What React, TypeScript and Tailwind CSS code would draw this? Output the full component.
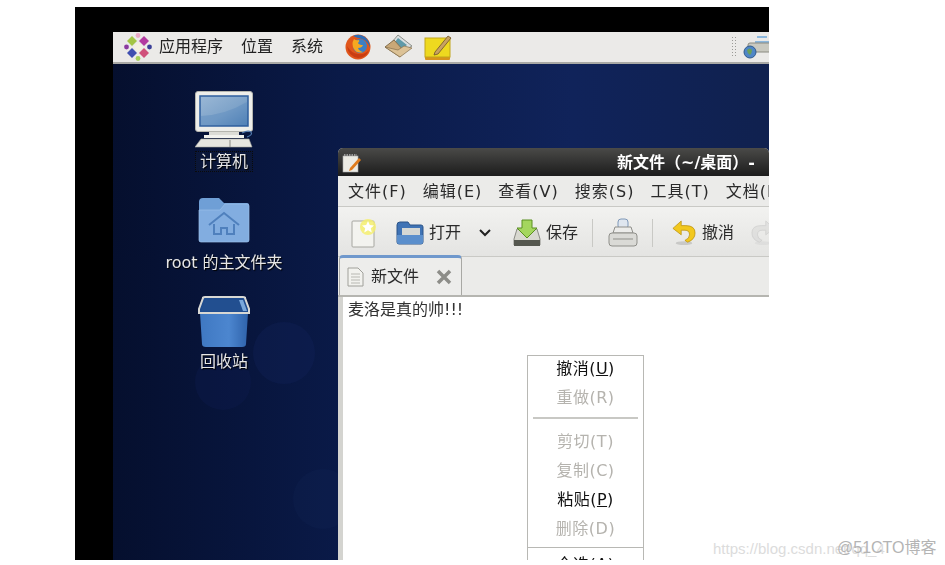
const ui = { fontFamily: '"DejaVu Sans", "Noto Sans CJK SC", sans-serif' };

const Flower = () => (
  <svg width="28" height="28" viewBox="0 0 28 28">
    <g transform="translate(14 14)">
      <path d="M-6 -11 L-1 -6 L-6 -1 L-11 -6Z" fill="#a3c545" />
      <path d="M6 -11 L11 -6 L6 -1 L1 -6Z" fill="#b23aa0" />
      <path d="M6 1 L11 6 L6 11 L1 6Z" fill="#d0507a" />
      <path d="M-6 1 L-1 6 L-6 11 L-11 6Z" fill="#3f4fb0" />
      <circle cx="0" cy="-11.500" r="2.400" fill="#e8a8c4" />
      <circle cx="11.500" cy="0" r="2.400" fill="#3b3f98" />
      <circle cx="0" cy="11.500" r="2.400" fill="#a6d05a" />
      <circle cx="-11.500" cy="0" r="2.400" fill="#8a3aa0" />
      <path d="M0 -5 L5 0 L0 5 L-5 0Z" fill="#f4f0e0" />
    </g>
  </svg>
);

const Firefox = () => (
  <svg width="26" height="26" viewBox="0 0 26 26">
    <circle cx="13" cy="13" r="12.500" fill="#e0561b" />
    <path d="M8 2 Q14 -1 20 3 Q25 7 25 14 Q23 7 17 5 Q12 4 8 2Z" fill="#2f6db5" />
    <circle cx="15" cy="12" r="7" fill="#3d7fc4" />
    <path d="M9 5 Q6 10 9 15 Q12 20 18 18 Q14 17 13 14 Q17 14 18 11 Q14 11 13 9 Q15 7 14 6 Q11 7 9 5Z" fill="#f6a821" />
    <path d="M2 12 Q3 22 13 24 Q21 24 24 16 Q20 21 13 20 Q6 19 2 12Z" fill="#c93d12" />
  </svg>
);

const Mail = () => (
  <svg width="30" height="26" viewBox="0 0 30 26">
    <path d="M14 1 L28 12 L18 18 L8 8Z" fill="#d9dfe0" stroke="#8c8f88" />
    <path d="M14 4 L23 11 L18 15 L11 8Z" fill="#5f9aa8" />
    <path d="M1 13 L10 6 L20 17 L16 23 Z" fill="#c9a877" stroke="#85704e" />
    <path d="M1 13 L16 23 L28 14 L20 12 L14 16Z" fill="#dcc296" stroke="#85704e" strokeWidth=".7" />
  </svg>
);

const Note = () => (
  <svg width="28" height="28" viewBox="0 0 28 28">
    <rect x="1" y="6" width="25" height="21" rx="1" fill="#d8951c" />
    <rect x="1" y="5" width="25" height="19" fill="#eed91f" stroke="#c2a51a" />
    <path d="M11 19 L24 3 L27 5 L14 21 L10 22Z" fill="#c8a262" stroke="#6e5428" strokeWidth=".8" />
  </svg>
);

const Network = () => (
  <svg width="40" height="26" viewBox="0 0 40 26">
    <path d="M14 3 h10 M12 8 h14" stroke="#6ea6d8" strokeWidth="1.500" fill="none" />
    <rect x="5" y="9" width="34" height="9" rx="2" fill="#c9c9c0" stroke="#8a8a80" />
    <circle cx="7" cy="18" r="6" fill="#4f86c6" stroke="#2f5a8c" />
    <path d="M4 16 q3 -3 5 0 q0 3 -2 5 q-3 -2 -3 -5z" fill="#6aa05a" />
  </svg>
);

const Computer = () => (
  <svg width="58" height="58" viewBox="0 0 58 58">
    <defs>
      <linearGradient id="scr" x1="0" y1="0" x2="1" y2="1">
        <stop offset="0" stopColor="#9bb8d6" />
        <stop offset=".55" stopColor="#7ea3c9" />
        <stop offset="1" stopColor="#3f73ad" />
      </linearGradient>
    </defs>
    <rect x=".5" y=".5" width="57" height="40" rx="2.500" fill="#eeeeea" stroke="#b5b5ae" />
    <rect x="5" y="5" width="48" height="30" fill="url(#scr)" stroke="#2f5f9e" strokeWidth="1.500" />
    <path d="M6 25 Q30 24 52 11 V34 H6Z" fill="#5f8dbf" opacity=".5" />
    <rect x="14" y="41" width="30" height="3" fill="#dcdcd6" />
    <rect x="9" y="44" width="40" height="3" fill="#f2f2ee" />
    <path d="M6 48 H54 L57 56 H0Z" fill="#e6e6e0" stroke="#a8a8a0" strokeWidth=".6" />
    <path d="M35 49 V56" stroke="#8a8a84" />
    <path d="M47 42 q6 -3 9 -1 q2 3 -4 5" stroke="#4f78ac" strokeWidth="1.200" fill="none" />
  </svg>
);

const Folder = () => (
  <svg width="52" height="46" viewBox="0 0 52 46">
    <path d="M1 5 Q1 1 5 1 H21 L26 6 H49 Q51 6 51 8 V43 Q51 45 49 45 H3 Q1 45 1 43Z" fill="#6f9fd6" />
    <path d="M1 13 H22 L27 7 H49 Q51 7 51 9 V43 Q51 45 49 45 H3 Q1 45 1 43Z" fill="#82ade0" stroke="#9cc0e8" strokeWidth=".7" />
    <path d="M11 28 L26 16 L41 28 M16 27 V37 H23 V31 H29 V37 H36 V27" stroke="#4f80bd" strokeWidth="2" fill="none" />
  </svg>
);

const Trash = () => (
  <svg width="54" height="52" viewBox="0 0 54 52">
    <defs>
      <linearGradient id="bin" x1="0" y1="0" x2="1" y2="0">
        <stop offset="0" stopColor="#3f78c2" />
        <stop offset=".6" stopColor="#4c86cf" />
        <stop offset="1" stopColor="#2f63ab" />
      </linearGradient>
    </defs>
    <path d="M3 17 L5 48 Q5 51 9 51 H45 Q49 51 49 48 L51 17Z" fill="url(#bin)" />
    <path d="M6 2 Q6 1 8 1 H46 Q48 1 48 2 L52 13 V17 H2 V13Z" fill="#1f4c8f" stroke="#d8d8d4" strokeWidth="2" />
    <path d="M8 4 H46 L50 15 H4Z" fill="#224f90" />
    <path d="M42 4 h4 l4 11 h-4z" fill="#7aa8dc" />
  </svg>
);

const Pad = () => (
  <svg width="20" height="20" viewBox="0 0 20 20">
    <rect x="1" y="3" width="15" height="16" fill="#ecebe4" stroke="#aaa" strokeWidth=".6" />
    <path d="M2 2h13" stroke="#999" strokeWidth="2" strokeDasharray="1.500 1" />
    <path d="M8 15 L17 5 L19 7 L10 17 L7 18Z" fill="#e07b1c" />
  </svg>
);

const NewDoc = () => (
  <svg width="26" height="30" viewBox="0 0 26 30" className="shrink-0">
    <rect x="1" y="3" width="22" height="26" rx="1" fill="#f3f3ef" stroke="#a6a6a0" />
    <circle cx="17" cy="9" r="8" fill="#f5ee70" opacity=".85" />
    <path d="M17 3 l1.800 4 4.200.4-3.200 2.800 1 4.200-3.800-2.200-3.800 2.200 1-4.200-3.200-2.800 4.200-.4z" fill="#fff" />
  </svg>
);

const Open = () => (
  <svg width="28" height="24" viewBox="0 0 28 24">
    <path d="M1 4 Q1 1 4 1 H12 L14 4 H25 Q27 4 27 6 V21 Q27 23 25 23 H3 Q1 23 1 21Z" fill="#3f73b5" stroke="#2c5488" />
    <rect x="6" y="7" width="18" height="8" fill="#d6d8d4" />
    <path d="M1 14 H27 V21 Q27 23 25 23 H3 Q1 23 1 21Z" fill="#5b8fcc" />
  </svg>
);

const Save = () => (
  <svg width="28" height="28" viewBox="0 0 28 28">
    <path d="M4 10 H24 L27 20 V26 H1 V20Z" fill="#d8d8d0" stroke="#8a8a84" />
    <rect x="1" y="21" width="26" height="6" fill="#55574f" />
    <path d="M9 1 H19 V9 H24 L14 19 L4 9 H9Z" fill="#a4d65e" stroke="#5a9020" />
  </svg>
);

const Printer = () => (
  <svg width="30" height="30" viewBox="0 0 30 30">
    <rect x="10" y="1" width="10" height="10" rx="3" fill="#dfe6ef" stroke="#7f98b8" />
    <path d="M7 9 H23 L25 15 H5Z" fill="#ececea" stroke="#8f8f8a" />
    <rect x="1" y="15" width="28" height="13" rx="3" fill="#dadad6" stroke="#8f8f8a" />
    <path d="M5 21 H25" stroke="#8f8f8a" />
  </svg>
);

const Undo = ({ muted = false }: { muted?: boolean }) => (
  <svg width="24" height="28" viewBox="0 0 26 28" className={muted ? "opacity-30 grayscale" : ""}>
    <ellipse cx="13" cy="25" rx="9" ry="2" fill="#00000022" />
    <path d="M10 1 L1 9 L10 16 V11 H14 Q19 11 19 16 Q19 20 14 22 L17 24 Q25 21 25 14 Q25 6 15 6 H10Z" fill="#f2c81e" stroke="#b89010" strokeWidth=".8" />
  </svg>
);

const Doc = () => (
  <svg width="17" height="20" viewBox="0 0 17 20">
    <path d="M1 1 H11 L16 6 V19 H1Z" fill="#f2f2ee" stroke="#a0a09a" />
    <path d="M4 7 H13 M4 10 H13 M4 13 H13 M4 16 H13" stroke="#b8b8b2" />
  </svg>
);

const CloseX = () => (
  <svg width="16" height="16" viewBox="0 0 16 16">
    <path d="M2 2 L14 14 M14 2 L2 14" stroke="#8d8d88" strokeWidth="3.500" />
  </svg>
);

const DesktopIcon = ({ icon, label, dotted, labelGap, mt }: { icon: React.ReactNode; label: string; dotted?: boolean; labelGap: string; mt: string }) => (
  <div className={`relative flex flex-col items-center ${mt}`}>
    {icon}
    <span
      className={`whitespace-nowrap text-[16px] text-[#e6e6e6] [text-shadow:1px_1px_1px_#000] ${labelGap} ${
        dotted ? "border border-dotted border-[#0a0a0a] bg-[#0a1638] px-[4px] leading-[19px]" : "leading-[21px]"
      }`}
    >
      {label}
    </span>
  </div>
);

const menuBar = ["文件(F)", "编辑(E)", "查看(V)", "搜索(S)", "工具(T)", "文档(D)"];

const MenuItem = ({ text, on, u }: { text: string; on?: boolean; u?: string }) => (
  <div className={`h-[29px] whitespace-nowrap text-center text-[16px] leading-[25px] tracking-[0.5px] ${on ? "text-[#111]" : "text-[#b5b3ae]"}`}>
    {text}
    {u ? (
      <>
        (<span className="underline">{u}</span>)
      </>
    ) : null}
  </div>
);

export default function App() {
  return (
    <div className="relative h-[565px] w-[945px] overflow-hidden bg-white pl-[75px] pt-[7px]" style={ui}>
      <div className="flex h-[553px] w-[694px] flex-col overflow-hidden bg-black pl-[38px] pt-[25px] blur-[0.5px]">
        {/* top panel */}
        <div className="flex h-[32px] w-[656px] shrink-0 items-center whitespace-nowrap border-b-2 border-[#a9a9a5] bg-[#ebeae8] pl-[11px] text-[16px] text-[#222]">
          <span className="shrink-0"><Flower /></span>
          <span className="ml-[7px] w-[64px] shrink-0">应用程序</span>
          <span className="ml-[18px] w-[32px] shrink-0">位置</span>
          <span className="ml-[18px] w-[32px] shrink-0">系统</span>
          <span className="ml-[22px] shrink-0"><Firefox /></span>
          <span className="ml-[13px] shrink-0"><Mail /></span>
          <span className="ml-[10px] shrink-0"><Note /></span>
          <div className="ml-[279px] h-[22px] w-[5px] shrink-0 bg-[radial-gradient(#9a9a96_1px,transparent_1px)] bg-[length:3px_3px]" />
          <span className="ml-[7px] w-[27px] shrink-0 overflow-hidden"><Network /></span>
        </div>

        {/* desktop */}
        <div className="relative flex-1 bg-[linear-gradient(90deg,#050f2e_0%,#0a1a48_35%,#10235a_70%,#10214f_100%)]">
          <div className="absolute left-[140px] top-[258px] h-[62px] w-[62px] rounded-full bg-[#14265c]/30" />
          <div className="absolute left-[82px] top-[290px] h-[56px] w-[56px] rounded-full bg-[#0f1f52]/30" />
          <div className="absolute left-[180px] top-[405px] h-[60px] w-[60px] rounded-full bg-[#14265c]/20" />

          <div className="relative flex w-[222px] flex-col items-center pt-[27px]">
            <DesktopIcon icon={<Computer />} label="计算机" dotted labelGap="mt-[2px]" mt="" />
            <DesktopIcon icon={<Folder />} label="root 的主文件夹" labelGap="mt-[9px]" mt="mt-[25px]" />
            <DesktopIcon icon={<Trash />} label="回收站" labelGap="mt-[3px]" mt="mt-[23px]" />
          </div>

          {/* gedit window */}
          <div className="absolute bottom-0 left-[225px] top-[84px] flex w-[431px] flex-col overflow-hidden rounded-t-[5px] bg-[#ededeb]">
            <div className="flex h-[28px] shrink-0 items-center bg-[linear-gradient(#4a4a48,#1c1c1c)] pl-[4px] pt-[2px] text-[16px] font-bold text-white">
              <Pad />
              <span className="ml-[255px] whitespace-nowrap">新文件（~/桌面）-</span>
            </div>
            <div className="flex h-[31px] shrink-0 items-center gap-[16px] overflow-hidden border-b border-[#c9c9c5] bg-[#ebebe9] pl-[10px] pt-[2px] text-[16px] tracking-[1px] text-[#2a2a2a]">
              {menuBar.map((m) => (
                <span key={m} className="shrink-0 whitespace-nowrap">{m}</span>
              ))}
            </div>
            <div className="flex h-[50px] shrink-0 items-center overflow-hidden border-b border-[#c9c9c5] bg-[linear-gradient(#f2f2f0,#e4e4e2)] pl-[13px] pt-[2px] text-[16px] text-[#2a2a2a]">
              <NewDoc />
              <span className="ml-[19px] shrink-0"><Open /></span>
              <span className="ml-[5px] shrink-0 whitespace-nowrap">打开</span>
              <svg className="ml-[17px] shrink-0" width="14" height="14" viewBox="0 0 14 14">
                <path d="M2 4 L7 9 L12 4" stroke="#222" strokeWidth="2" fill="none" />
              </svg>
              <span className="ml-[21px] shrink-0"><Save /></span>
              <span className="ml-[5px] shrink-0 whitespace-nowrap">保存</span>
              <div className="ml-[14px] h-[28px] w-px shrink-0 bg-[#c9c9c5]" />
              <span className="ml-[15px] shrink-0"><Printer /></span>
              <div className="ml-[14px] h-[28px] w-px shrink-0 bg-[#c9c9c5]" />
              <span className="ml-[19px] shrink-0"><Undo /></span>
              <span className="ml-[6px] shrink-0 whitespace-nowrap">撤消</span>
              <span className="ml-[17px] shrink-0 -scale-x-100"><Undo muted /></span>
            </div>
            <div className="flex h-[40px] shrink-0 items-end border-b-2 border-[#b5b5b0] bg-[#ebebe9]">
              <div className="ml-px flex h-[40px] w-[123px] items-center rounded-t-[4px] border-x border-[#a8a8a4] border-t-[3px] border-t-[#6f98cc] bg-[#ededeb] pl-[7px] text-[16px] text-[#2a2a2a]">
                <Doc />
                <span className="ml-[7px]">新文件</span>
                <span className="ml-[17px]"><CloseX /></span>
              </div>
            </div>
            <div className="relative flex-1 border-l-[5px] border-[#d4d4d0] bg-white pl-[5px] pt-[2px] text-[16px] leading-[22px] text-[#333]">
              麦洛是真的帅!!!
              {/* context menu */}
              <div className="absolute left-[184px] top-[58px] w-[117px] border border-[#b8b8b4] bg-white">
                <MenuItem text="撤消" on u="U" />
                <MenuItem text="重做(R)" />
                <div className="mx-[5px] mb-[10px] mt-[3px] h-[2px] bg-[#c8c8c4]" />
                <MenuItem text="剪切(T)" />
                <MenuItem text="复制(C)" />
                <MenuItem text="粘贴" on u="P" />
                <MenuItem text="删除(D)" />
                <div className="mt-[2px] h-px bg-[#b8b8b4]" />
                <div className="pt-[4px]">
                  <MenuItem text="全选(A)" on />
                </div>
              </div>
            </div>
          </div>
        </div>
      </div>

      {/* watermark */}
      <div className="absolute left-[713px] top-[538px] whitespace-nowrap text-[15px] text-[#dcdcdc]" style={{ fontFamily: '"Liberation Sans", sans-serif' }}>
        https://blog.csdn.net/qq_4
      </div>
      <div className="absolute left-[837px] top-[536px] whitespace-nowrap text-[16px] text-[#b4b4b4]" style={{ fontFamily: '"Liberation Sans", "Noto Sans CJK SC", sans-serif' }}>
        @51CTO博客
      </div>
    </div>
  );
}
